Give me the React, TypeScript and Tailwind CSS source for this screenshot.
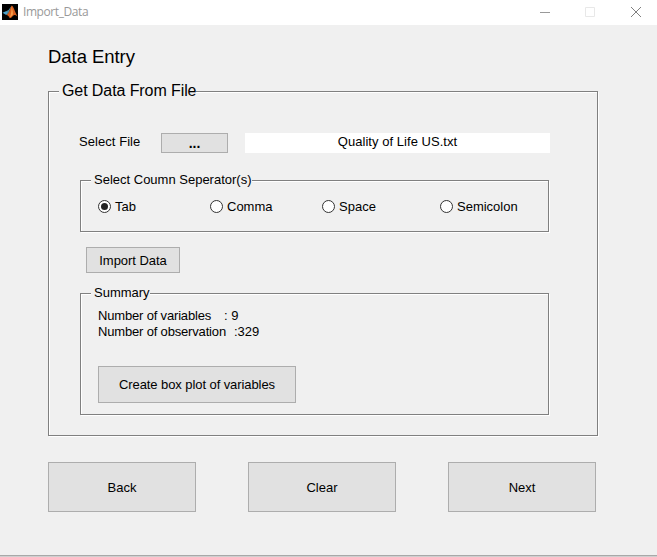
import type { ReactNode } from "react";

type GroupProps = { title: string; className: string; titleClass: string; children: ReactNode };

function Group({ title, className, titleClass, children }: GroupProps) {
  return (
    <section
      className={`flex flex-col items-start border border-[#808080] shadow-[1px_1px_0_#fff,inset_1px_1px_0_#fff] ${className}`}
    >
      <h2 className={`shrink-0 whitespace-nowrap bg-[#f0f0f0] ${titleClass}`}>{title}</h2>
      {children}
    </section>
  );
}

function Button({ className, children }: { className: string; children: ReactNode }) {
  return (
    <button
      type="button"
      className={`flex shrink-0 items-center justify-center whitespace-nowrap border border-[#adadad] bg-[#e1e1e1] ${className}`}
    >
      {children}
    </button>
  );
}

function Radio({ label, checked, className }: { label: string; checked?: boolean; className: string }) {
  return (
    <label className={`flex shrink-0 items-start gap-[4px] ${className}`}>
      <span className="mt-px flex size-[13px] items-center justify-center rounded-full border border-[#333] bg-white">
        {checked && <span className="size-[7px] rounded-full bg-[#222]" />}
      </span>
      {label}
    </label>
  );
}

function Logo() {
  return (
    <svg width="16" height="16" viewBox="0 0 16 16" className="mt-[4px] shrink-0">
      <rect width="16" height="16" fill="#000" />
      <path d="M0.5 8.8 4.5 7 6.7 8.8 4.2 11Z" fill="#4ba3cc" />
      <path d="M4.5 7 6.5 6 9.5 2 6.7 8.8 5.5 9.5Z" fill="#4d8fa8" />
      <path d="M9.8 1.5C11.3 2 13 8 15.5 12.5 13.5 10.8 12.3 10.5 10.8 12 9.5 13.5 8.8 14.2 7.8 14.3 7 12.5 6 11 4.2 11 7.5 9.5 8 4 9.8 1.5Z" fill="#d9601e" />
      <path d="M9.5 3C9.8 6 9.2 10 7.8 13.5 9.3 12.5 10 11.5 10.9 10.5 11 7.5 10.3 5 9.5 3Z" fill="#f6a04c" />
    </svg>
  );
}

export default function App() {
  return (
    <main className="flex h-[557px] w-[657px] flex-col overflow-hidden bg-[#f0f0f0] font-['Liberation_Sans',Arial,sans-serif] text-[13px] leading-[16px] text-black">
      <header className="flex h-[25px] shrink-0 bg-white pl-[2px]">
        <Logo />
        <span className="ml-[5px] mt-[4px] font-['Open_Sans',sans-serif] text-[12px] tracking-[-0.42px] text-[#999]">
          Import_Data
        </span>
        <svg width="104" height="12" viewBox="0 0 104 12" className="ml-auto mr-[13px] mt-[6px]" fill="none">
          <path d="M0 6.5h10" stroke="#999" />
          <path d="M45.5 1.5h9v9h-9z" stroke="#e8e8e8" />
          <path d="m91 1 10 10m0-10L91 11" stroke="#808080" />
        </svg>
      </header>
      <div className="flex h-[530px] shrink-0 flex-col px-[48px]">
        <h1 className="mt-[20px] text-[18.5px] leading-[24px] tracking-[-0.05px]">Data Entry</h1>
        <Group
          title="Get Data From File"
          className="mt-[22px] h-[345px] w-[550px] shrink-0 pl-[10px]"
          titleClass="-mt-[12px] pl-[3px] text-[16px] leading-[22px] tracking-[-0.09px]"
        >
          <div className="ml-[20px] mt-[31px] flex h-[20px] shrink-0">
            <span className="mt-px w-[82px] tracking-[0.06px]">Select File</span>
            <Button className="h-[20px] w-[67px] text-[14px] font-bold">...</Button>
            <div className="ml-[17px] h-[20px] w-[305px] bg-white text-center leading-[17px] tracking-[0.04px]">Quality of Life US.txt</div>
          </div>
          <Group
            title="Select Coumn Seperator(s)"
            className="ml-[21px] mt-[27px] h-[52px] w-[469px] shrink-0 pl-[10px]"
            titleClass="-mt-[9px] pl-[3px]"
          >
            <div className="ml-[7px] mt-[11px] flex">
              <Radio label="Tab" checked className="w-[112px]" />
              <Radio label="Comma" className="w-[112px]" />
              <Radio label="Space" className="w-[118px]" />
              <Radio label="Semicolon" className="" />
            </div>
          </Group>
          <Button className="ml-[27px] mt-[15px] h-[26px] w-[94px] pt-[2px] tracking-[-0.05px]">Import Data</Button>
          <Group
            title="Summary"
            className="ml-[21px] mt-[20px] h-[122px] w-[469px] shrink-0 pl-[10px]"
            titleClass="-mt-[9px] pl-[3px]"
          >
            <dl className="ml-[7px] mt-[7px] flex">
              <dt className="w-[126px] tracking-[-0.17px]">Number of variables</dt>
              <dd>: 9</dd>
            </dl>
            <dl className="ml-[7px] flex">
              <dt className="w-[136px] tracking-[-0.17px]">Number of observation</dt>
              <dd>:329</dd>
            </dl>
            <Button className="ml-[7px] mt-[26px] h-[37px] w-[198px] tracking-[-0.08px]">Create box plot of variables</Button>
          </Group>
        </Group>
        <div className="mt-[26px] flex gap-[52px]">
          <Button className="h-[50px] w-[148px] pt-[2px]">Back</Button>
          <Button className="h-[50px] w-[148px] pt-[2px]">Clear</Button>
          <Button className="h-[50px] w-[148px] pt-[2px]">Next</Button>
        </div>
      </div>
      <footer className="h-[2px] shrink-0 border-t border-[#a8a8a8] bg-[#cfcfcf]" />
    </main>
  );
}
